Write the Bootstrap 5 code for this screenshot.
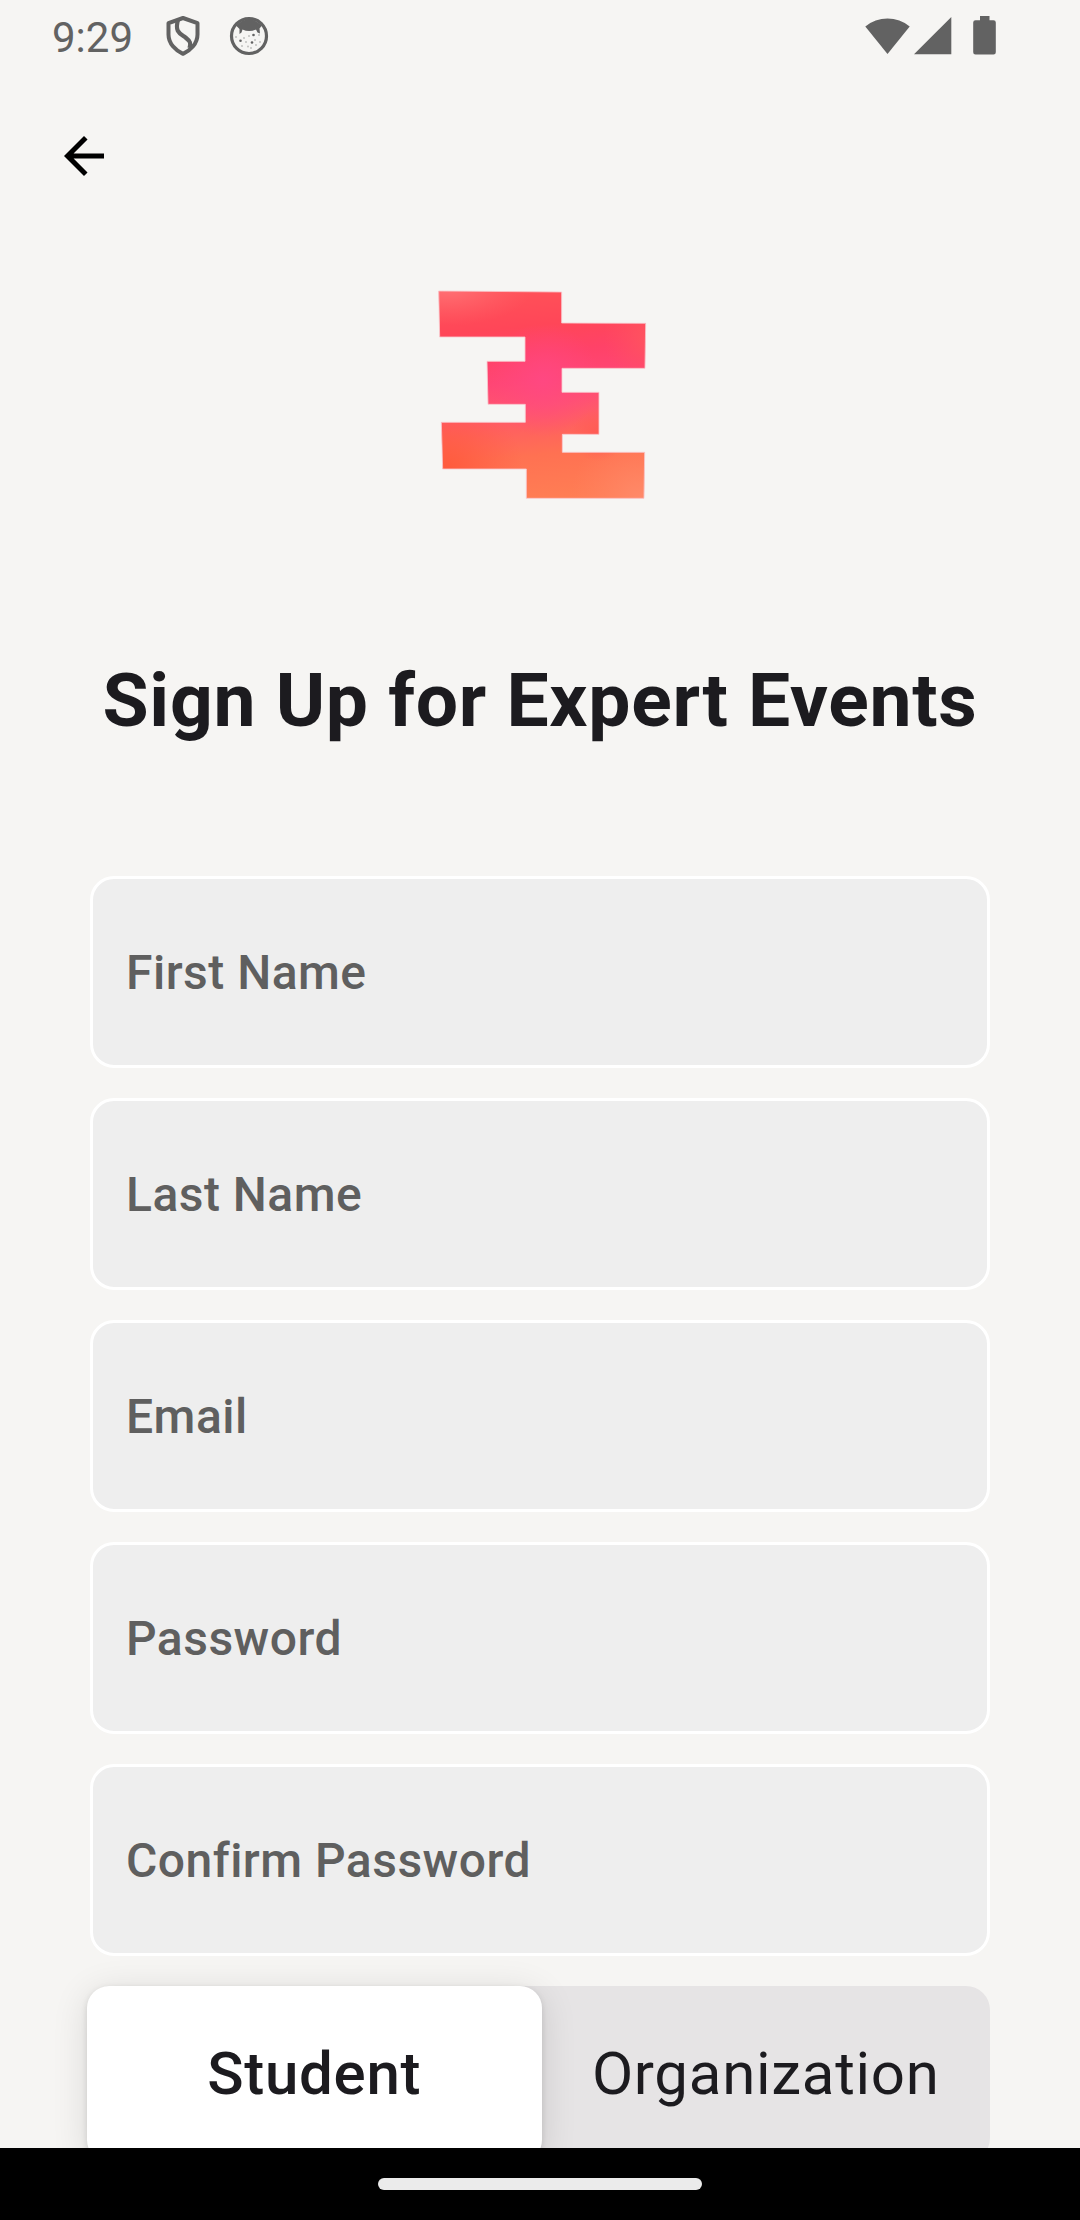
<!DOCTYPE html>
<html lang="en">
<head>
<meta charset="utf-8">
<meta name="viewport" content="width=device-width, initial-scale=1">
<title>Sign Up</title>
<link href="https://cdn.jsdelivr.net/npm/bootstrap@5.3.0/dist/css/bootstrap.min.css" rel="stylesheet">
<style>
body{background:#f6f5f3;font-family:Roboto,"Noto Sans",sans-serif;color:#1c1b1f;font-size:48px}
.screen{width:1080px;height:2220px}
.scroll-area{height:0}
.statusbar{height:72px;padding:0 84px 0 52px;color:#626262;fill:#626262}
.clock{font-size:42px;line-height:75px;width:112px}
.topbar{height:168px;padding:54px 0 0 54px}
.brand{height:250px;margin-top:30px}
.headline{font-size:75px;line-height:90px;font-weight:700;letter-spacing:.74px;margin:135px 0 0}
.fields{padding:131px 90px 0;gap:30px}
.field-box{height:192px;border:3px solid #fff;border-radius:24px;background:#eee;padding:0 33px;font-size:48px;font-weight:500;color:#5f5f5f;letter-spacing:.48px}
.field-box::placeholder{color:#5f5f5f;opacity:1}
.roles{margin:30px 90px 0 87px;height:176px;border-radius:24px;background:#e6e4e5}
.roles .btn{font-size:60px;line-height:70px;letter-spacing:.72px;color:#1c1b1f;border:0;border-radius:22px;padding:0}
.roles .picked{flex:0 0 454.5px;background:#fff;font-weight:500;box-shadow:0 6px 36px rgba(0,0,0,.12),0 2px 6px rgba(0,0,0,.12)}
.navstrip{height:72px;background:#000}
.pill{width:324px;height:12px;background:#ebebeb}
</style>
<script src="https://cdn.jsdelivr.net/npm/bootstrap@5.3.0/dist/js/bootstrap.bundle.min.js"></script>
</head>
<body>
<div class="screen d-flex flex-column overflow-hidden">
  <main class="scroll-area flex-grow-1 overflow-hidden">
    <header class="statusbar d-flex align-items-start">
      <span class="clock">9:29</span>
      <svg width="120" height="72" viewBox="164 0 120 72">
        <path d="M183 18L197.500 23.200V34.500C197.500 43.500 190.500 50.600 183 53.800C175.500 50.600 168.500 43.500 168.500 34.500V23.200Z" fill="none" stroke="#626262" stroke-width="4" stroke-linejoin="round"/>
        <path d="M178 20C174.500 32 180 33.500 185.500 37.500C190.500 41.500 191 43 189.500 48" fill="none" stroke="#626262" stroke-width="4.200"/>
        <circle cx="249" cy="36" r="17.500" fill="none" stroke="#626262" stroke-width="3.200"/>
        <path d="M236 25.500Q249 13 262 25.500L259.500 28.500L260 33.500L257.500 32.500L256 29.500Q249 32.500 242.500 29.500L241.500 32.500L239.500 34L239.500 29Z"/>
        <circle cx="240.500" cy="40.700" r="1.300"/><circle cx="252" cy="42.500" r="1.300"/><circle cx="253.500" cy="35" r="1.300"/>
        <g opacity=".35"><circle cx="236" cy="37" r="1"/><circle cx="244" cy="38" r="1"/><circle cx="249" cy="36" r="1"/><circle cx="259" cy="35" r="1"/><circle cx="246" cy="42" r="1"/><circle cx="255" cy="40" r="1"/><circle cx="260" cy="42" r="1"/><circle cx="242" cy="46" r="1"/><circle cx="248" cy="46.500" r="1"/><circle cx="251" cy="48" r="1"/><circle cx="256" cy="45" r="1"/></g>
      </svg>
      <svg class="ms-auto" width="136" height="72" viewBox="860 0 136 72">
        <path d="M865.300 26.500A35 35 0 0 1 909.700 26.500L887.500 54Z"/><path d="M914 54.200L951.300 17V54.200Z"/>
        <path d="M980 16h9.500v4.300H993.500a2.300 2.300 0 0 1 2.300 2.300V52.200a2.300 2.300 0 0 1-2.300 2.300H975.500a2.300 2.300 0 0 1-2.300-2.300V22.600a2.300 2.300 0 0 1 2.300-2.300H980Z"/>
      </svg>
    </header>
    <nav class="topbar d-flex align-items-start"><svg width="60" height="60" viewBox="0 0 24 24"><path d="M20 11H7.830L13.420 5.410 12 4 4 12 12 20 13.410 18.590 7.830 13H20Z"/></svg></nav>
    <div class="brand d-flex justify-content-center">
      <svg width="240" height="250" viewBox="0 0 720 750">
        <defs>
          <linearGradient id="base" gradientUnits="userSpaceOnUse" x1="330" y1="60" x2="390" y2="690">
            <stop offset="0" stop-color="#ff5158"/><stop offset=".17" stop-color="#ff4658"/><stop offset=".3" stop-color="#ff4268"/><stop offset=".43" stop-color="#ff4674"/><stop offset=".55" stop-color="#ff5470"/><stop offset=".66" stop-color="#ff625e"/><stop offset=".78" stop-color="#ff7152"/><stop offset="1" stop-color="#ff7e54"/>
          </linearGradient>
          <radialGradient id="pink" gradientUnits="userSpaceOnUse" cx="370" cy="330" r="170"><stop offset="0" stop-color="#ff4884" stop-opacity=".85"/><stop offset="1" stop-color="#ff4880" stop-opacity="0"/></radialGradient>
          <radialGradient id="tl" gradientUnits="userSpaceOnUse" cx="80" cy="50" r="260" gradientTransform="matrix(1 0 0 .45 0 28)"><stop offset="0" stop-color="#ff7478"/><stop offset="1" stop-color="#ff6068" stop-opacity="0"/></radialGradient>
          <radialGradient id="bl" gradientUnits="userSpaceOnUse" cx="70" cy="610" r="240"><stop offset="0" stop-color="#ff583a"/><stop offset="1" stop-color="#ff5c44" stop-opacity="0"/></radialGradient>
          <radialGradient id="br" gradientUnits="userSpaceOnUse" cx="660" cy="690" r="210"><stop offset="0" stop-color="#ff8a6a"/><stop offset="1" stop-color="#ff8060" stop-opacity="0"/></radialGradient>
          <radialGradient id="rt" gradientUnits="userSpaceOnUse" cx="700" cy="200" r="150"><stop offset="0" stop-color="#ff565e"/><stop offset="1" stop-color="#ff5060" stop-opacity="0"/></radialGradient>
          <radialGradient id="rm" gradientUnits="userSpaceOnUse" cx="535" cy="495" r="80"><stop offset="0" stop-color="#ff5a54"/><stop offset="1" stop-color="#ff5a54" stop-opacity="0"/></radialGradient>
          <path id="emblem" d="M56 63L425 66V159L677 160L675 295H426V367H537V493H427V547H674L672 685H319V597H68L64 457H316V403H204L201 274H315V201H59Z"/>
        </defs>
        <use href="#emblem" fill="url(#base)"/><use href="#emblem" fill="url(#pink)"/><use href="#emblem" fill="url(#tl)"/><use href="#emblem" fill="url(#bl)"/><use href="#emblem" fill="url(#br)"/><use href="#emblem" fill="url(#rt)"/><use href="#emblem" fill="url(#rm)"/>
        <use href="#emblem" fill="none" stroke="#f9c9ce" stroke-width="2.500"/>
      </svg>
    </div>
    <h1 class="headline text-center text-nowrap">Sign Up for Expert Events</h1>
    <form>
      <div class="fields d-flex flex-column">
        <input class="form-control field-box" type="text" placeholder="First Name" aria-label="First Name">
        <input class="form-control field-box" type="text" placeholder="Last Name" aria-label="Last Name">
        <input class="form-control field-box" type="email" placeholder="Email" aria-label="Email">
        <input class="form-control field-box" type="password" placeholder="Password" aria-label="Password">
        <input class="form-control field-box" type="password" placeholder="Confirm Password" aria-label="Confirm Password">
      </div>
      <div class="roles d-flex">
        <button type="button" class="btn picked">Student</button>
        <button type="button" class="btn flex-grow-1">Organization</button>
      </div>
    </form>
  </main>
  <footer class="navstrip d-flex justify-content-center align-items-center"><div class="pill rounded-pill"></div></footer>
</div>
</body>
</html>
